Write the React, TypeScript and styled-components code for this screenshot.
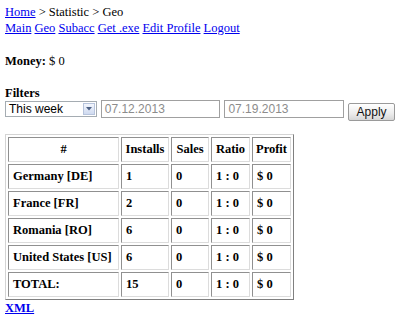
import styled, { createGlobalStyle } from "styled-components";

const GlobalStyle = createGlobalStyle`
  body {
    margin: 4px 5px;
    background: #fff;
    color: #000;
    font-family: "Liberation Serif", "Times New Roman", serif;
    font-size: 12.5px;
    line-height: 16px;
  }
`;

const Line = styled.div`
  white-space: nowrap;
`;

const Link = styled.a<{ $bold?: boolean }>`
  color: #0000ee;
  text-decoration: underline;
  font-weight: ${(p) => (p.$bold ? "bold" : "normal")};
  cursor: pointer;
`;

const Money = styled.div`
  margin-top: 17px;
`;

const FiltersTitle = styled.div`
  margin-top: 16px;
  font-weight: bold;
`;

const FilterRow = styled.div`
  display: flex;
  align-items: flex-start;
  height: 21px;
`;

const SelectBox = styled.div`
  display: flex;
  align-items: center;
  justify-content: space-between;
  box-sizing: border-box;
  width: 92px;
  height: 16px;
  border: 1px solid #a5acb2;
  padding: 0 1px 0 3px;
  font-family: "Liberation Sans", Arial, sans-serif;
  font-size: 12px;
  line-height: 14px;
  background: #fff;
`;

const ArrowButton = styled.div`
  display: flex;
  align-items: center;
  justify-content: center;
  box-sizing: border-box;
  width: 12px;
  height: 12px;
  border: 1px solid #b7c4dc;
  background: linear-gradient(#f3f6fd, #cfdaf0);
`;

const DateInput = styled.div<{ $gap: number }>`
  box-sizing: border-box;
  width: 120px;
  height: 18px;
  margin-left: ${(p) => p.$gap}px;
  margin-top: -1px;
  border: 1px solid #a0a0a0;
  padding: 0 3px;
  font-family: "Liberation Sans", Arial, sans-serif;
  font-size: 12px;
  line-height: 16px;
  color: #8c8c8c;
`;

const ApplyButton = styled.button`
  box-sizing: border-box;
  width: 47px;
  height: 18px;
  margin-left: 4px;
  margin-top: 2px;
  padding: 0;
  border: 1px solid #9a9a9a;
  border-radius: 2px;
  background: linear-gradient(#ffffff, #ececec 60%, #d6d6d6);
  font-family: "Liberation Sans", Arial, sans-serif;
  font-size: 12px;
  line-height: 16px;
  color: #111;
`;

const Table = styled.table`
  margin-top: 12px;
  border-collapse: separate;
  border-spacing: 2px;
  border: 1px solid;
  border-color: #d4d4d4 #808080 #808080 #d4d4d4;
  font-weight: bold;
`;

const Th = styled.th<{ $w: number }>`
  width: ${(p) => p.$w}px;
  box-sizing: border-box;
  height: 25px;
  padding: 4px 3px;
  border: 1px solid;
  border-color: #909090 #dcdcdc #dcdcdc #909090;
  text-align: center;
  line-height: 15px;
  white-space: nowrap;
`;

const Td = styled.td`
  box-sizing: border-box;
  height: 25px;
  padding: 4px 3px 4px 4px;
  border: 1px solid;
  border-color: #909090 #dcdcdc #dcdcdc #909090;
  text-align: left;
  line-height: 15px;
  white-space: nowrap;
`;

const rows = [
  ["Germany [DE]", "1", "0", "1 : 0", "$ 0"],
  ["France [FR]", "2", "0", "1 : 0", "$ 0"],
  ["Romania [RO]", "6", "0", "1 : 0", "$ 0"],
  ["United States [US]", "6", "0", "1 : 0", "$ 0"],
  ["TOTAL:", "15", "0", "1 : 0", "$ 0"],
];

const headers: [string, number][] = [
  ["#", 111],
  ["Installs", 48],
  ["Sales", 38],
  ["Ratio", 39],
  ["Profit", 38],
];

const App = () => {
  return (
    <>
      <GlobalStyle />
      <Line>
        <Link>Home</Link> &gt; Statistic &gt; Geo
      </Line>
      <Line>
        <Link>Main</Link> <Link>Geo</Link> <Link>Subacc</Link>{" "}
        <Link>Get .exe</Link> <Link>Edit Profile</Link> <Link>Logout</Link>
      </Line>
      <Money>
        <b>Money:</b> $ 0
      </Money>
      <FiltersTitle>Filters</FiltersTitle>
      <FilterRow>
        <SelectBox>
          <span>This week</span>
          <ArrowButton>
            <svg width="6" height="4" viewBox="0 0 6 4">
              <path d="M0 0 L6 0 L3 3.5 Z" fill="#4d6185" />
            </svg>
          </ArrowButton>
        </SelectBox>
        <DateInput $gap={4}>07.12.2013</DateInput>
        <DateInput $gap={4}>07.19.2013</DateInput>
        <ApplyButton>Apply</ApplyButton>
      </FilterRow>
      <Table>
        <thead>
          <tr>
            {headers.map(([h, w]) => (
              <Th key={h} $w={w}>
                {h}
              </Th>
            ))}
          </tr>
        </thead>
        <tbody>
          {rows.map((r) => (
            <tr key={r[0]}>
              {r.map((c, i) => (
                <Td key={i}>{c}</Td>
              ))}
            </tr>
          ))}
        </tbody>
      </Table>
      <Line>
        <Link $bold>XML</Link>
      </Line>
    </>
  );
};

export default App;
